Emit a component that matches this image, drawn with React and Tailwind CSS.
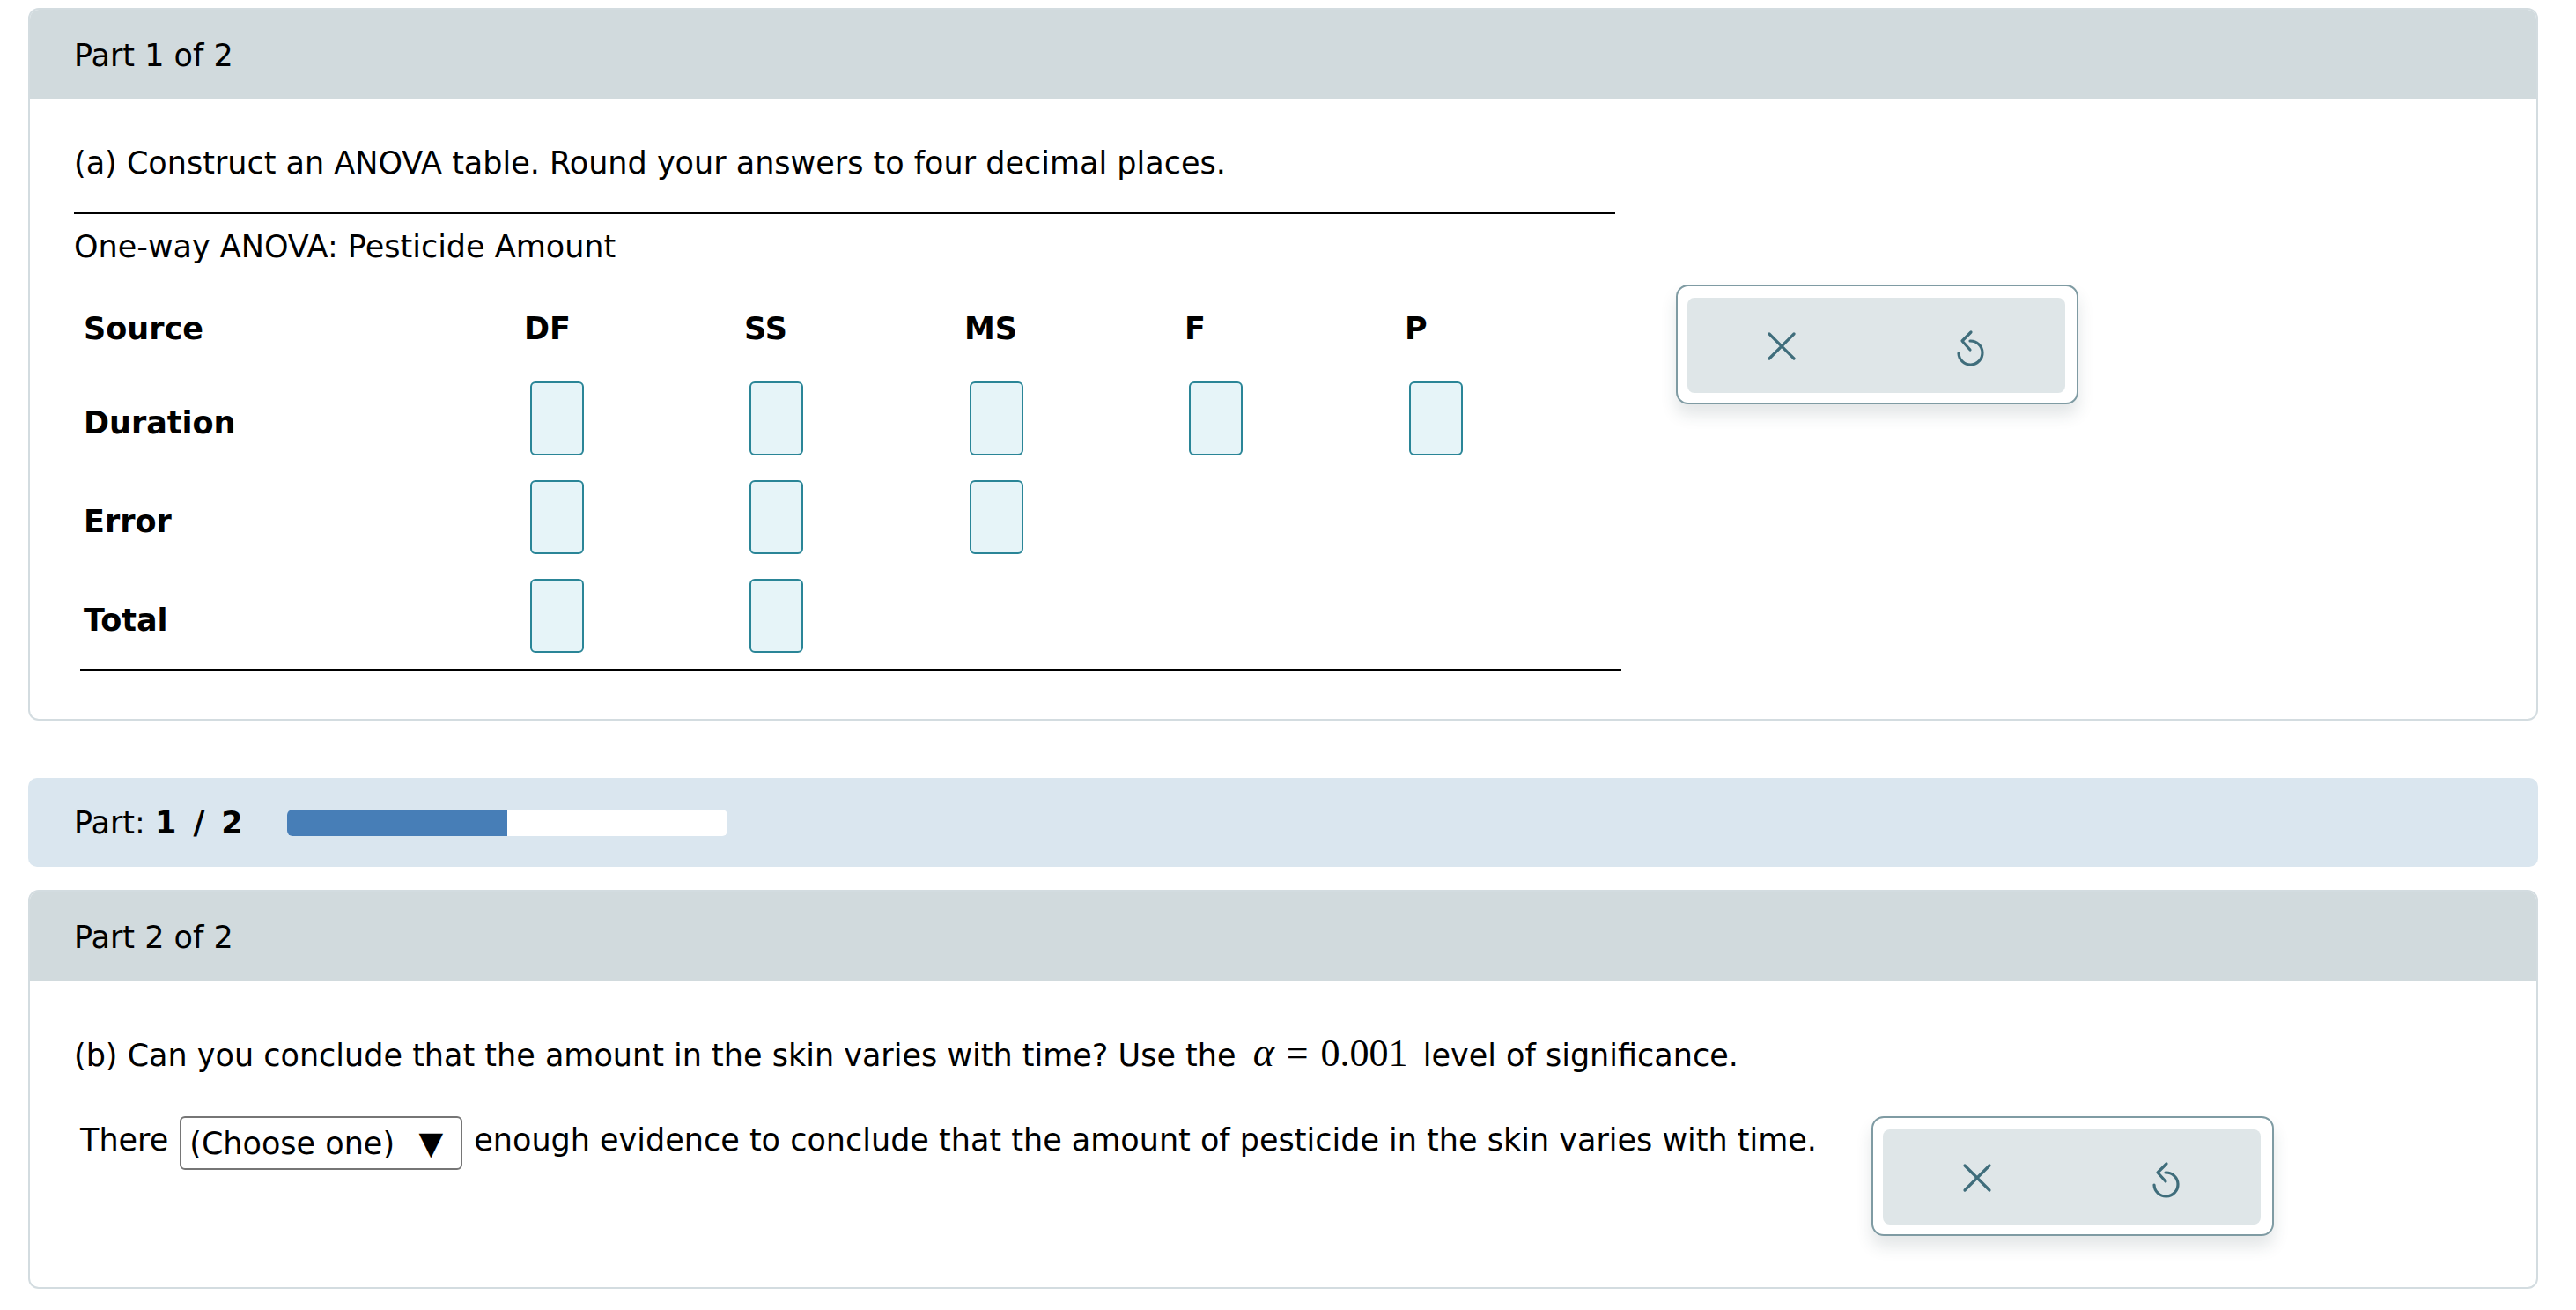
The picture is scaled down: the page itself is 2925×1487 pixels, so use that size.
import React from "react";

function XIcon() {
  return (
    <svg width="34" height="34" viewBox="0 0 34 34" fill="none">
      <path d="M3 3 L31 31 M31 3 L3 31" stroke="#3f6d7b" strokeWidth="3.2" strokeLinecap="round" />
    </svg>
  );
}

function UndoIcon() {
  return (
    <svg width="50" height="50" viewBox="0 0 50 50" fill="none">
      <path d="M24 18 A13.5 13.5 0 1 1 11 32" stroke="#3f6d7b" strokeWidth="3.2" strokeLinecap="round" />
      <path d="M25 8 L15 18 L24 28" stroke="#3f6d7b" strokeWidth="3.2" strokeLinecap="round" strokeLinejoin="round" />
    </svg>
  );
}

function FeedbackBox() {
  return (
    <div className="w-[457px] h-[136px] shrink-0 rounded-[14px] border-2 border-[#7f9ba3] bg-white pl-[11px] pr-[13px] pt-[13px] pb-[11px] shadow-[0_12px_18px_rgba(40,60,70,0.13)]">
      <div className="flex h-full rounded-[8px] bg-[#dfe6e8]">
        <div className="flex flex-1 items-center justify-center pt-[1px]">
          <XIcon />
        </div>
        <div className="flex flex-1 items-center justify-center pt-[3px]">
          <UndoIcon />
        </div>
      </div>
    </div>
  );
}

function Input() {
  return <div className="ml-[8px] h-[84px] w-[61px] rounded-[6px] border-2 border-[#2a8597] bg-[#e6f4f8]" />;
}

function Row({ label, cells }) {
  return (
    <div className="flex h-[112px] items-center">
      <div className="w-[504px] pl-[4px] pt-[10px] font-bold">{label}</div>
      {[0, 1, 2, 3, 4].map((i) => (
        <div key={i} className="w-[250px]">
          {i < cells ? <Input /> : null}
        </div>
      ))}
    </div>
  );
}

export default function App() {
  return (
    <div className="min-h-[1487px] bg-white pl-[32px] pt-[9px] font-['DejaVu_Sans',sans-serif] text-[35px] leading-[52px] text-black">
      {/* Part 1 card */}
      <div className="w-[2850px] overflow-hidden rounded-[12px] border-2 border-[#d3dce0]">
        <div className="flex h-[101px] items-center bg-[#d1dadd] pl-[50px] pt-[2px]">Part 1 of 2</div>
        <div className="pl-[50px] pt-[47px] pb-[54px]">
          <div>(a) Construct an ANOVA table. Round your answers to four decimal places.</div>
          <div className="mt-[30px] w-[1750px] border-t-2 border-black" />
          <div className="mt-[11px]">One-way ANOVA: Pesticide Amount</div>
          <div className="mt-[17px] flex items-start">
            <div className="ml-[7px] w-[1750px] border-b-[3px] border-black pb-[4px]">
              <div className="flex h-[96px] items-center pt-[4px] font-bold">
                <div className="w-[504px] pl-[4px]">Source</div>
                <div className="w-[250px]">DF</div>
                <div className="w-[250px]">SS</div>
                <div className="w-[250px]">MS</div>
                <div className="w-[250px]">F</div>
                <div className="w-[246px]">P</div>
              </div>
              <Row label="Duration" cells={5} />
              <Row label="Error" cells={3} />
              <Row label="Total" cells={2} />
            </div>
            <div className="ml-[62px]">
              <FeedbackBox />
            </div>
          </div>
        </div>
      </div>

      {/* Progress strip */}
      <div className="mt-[65px] flex h-[101px] w-[2850px] items-center rounded-[10px] bg-[#dae6ef] pl-[52px]">
        <span>
          Part:{" "}
          <span className="font-bold">
            1<span className="mx-[19px]">/</span>2
          </span>
        </span>
        <div className="ml-[50px] flex h-[30px] w-[500px] overflow-hidden rounded-[6px] bg-white">
          <div className="h-full w-[250px] bg-[#477eb7]" />
        </div>
      </div>

      {/* Part 2 card */}
      <div className="mt-[26px] w-[2850px] overflow-hidden rounded-[12px] border-2 border-[#d3dce0]">
        <div className="flex h-[101px] items-center bg-[#d1dadd] pl-[50px] pt-[2px]">Part 2 of 2</div>
        <div className="pl-[50px] pt-[56px] pb-[58px]">
          <div className="flex items-baseline">
            <span>(b) Can you conclude that the amount in the skin varies with time? Use the&nbsp;</span>
            <span className="ml-[8px] font-['Liberation_Serif',serif] text-[46px] italic">α</span>
            <span className="mx-[14px] font-['Liberation_Serif',serif] text-[44px]">=</span>
            <span className="font-['Liberation_Serif',serif] text-[44px]">0.001</span>
            <span className="ml-[6px]">&nbsp;level of significance.</span>
          </div>
          <div className="mt-[43px] ml-[7px] flex items-start">
            <div className="flex h-[61px] items-center">
              <span className="mb-[8px]">There</span>
              <div className="mx-[13px] flex h-[61px] w-[321px] items-center justify-between rounded-[6px] border-2 border-[#767676] pl-[9px] pr-[20px]">
                <span>(Choose one)</span>
                <span className="text-[36px]">▼</span>
              </div>
              <span className="mb-[8px]">enough evidence to conclude that the amount of pesticide in the skin varies with time.</span>
            </div>
            <div className="ml-[62px]">
              <FeedbackBox />
            </div>
          </div>
        </div>
      </div>
    </div>
  );
}
